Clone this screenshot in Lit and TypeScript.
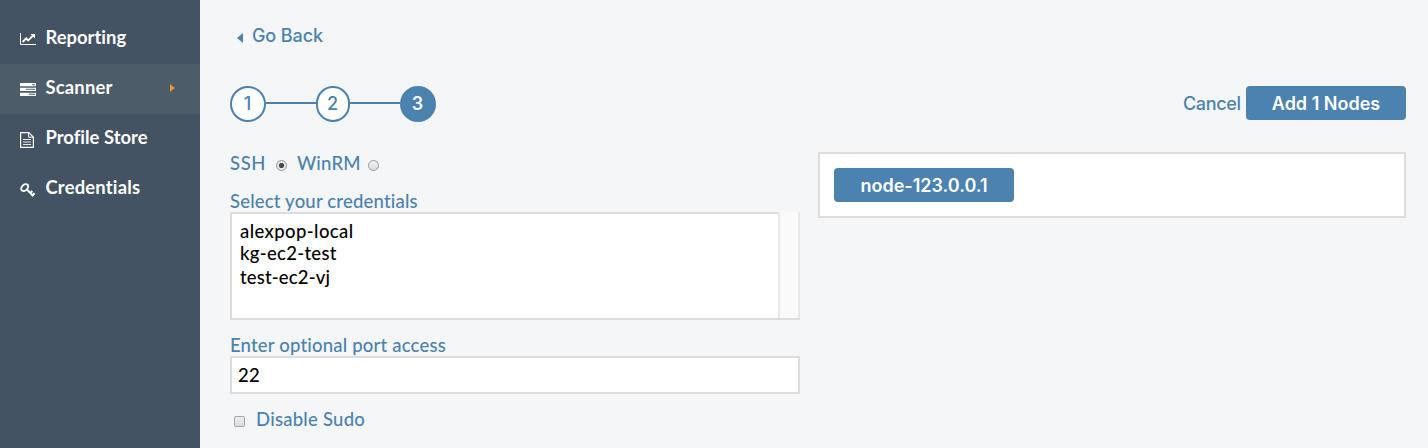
import { LitElement, html, css, svg } from "lit";
import { customElement } from "lit/decorators.js";

const chartIcon = svg`<svg width="16" height="12" viewBox="0 0 16 12"><path d="M.5 0v11.5H16" fill="none" stroke="#fff"/><path d="M2.6 9 6.2 5.4 8.2 7.4 13 2.6" fill="none" stroke="#fff" stroke-width="2"/><path d="M10.5 1H15v4.5z" fill="#fff"/></svg>`;
const serverIcon = svg`<svg width="16" height="13" viewBox="0 0 16 13"><path d="M0 0h16v3.2H0zM0 4.8h16V8H0zM0 9.7h16v3.2H0z" fill="#fff"/><path d="M12 1h3v1.2h-3zM6 5.8h9V7H6zM9 10.6h6v1.3H9z" fill="#7d8994"/></svg>`;
const fileIcon = svg`<svg width="14" height="16" viewBox="0 0 14 16"><path d="M.6.6h8.2l4.6 4.6v10.2H.6z" fill="none" stroke="#fff" stroke-width="1.2"/><path d="M8.6.6v4.6h4.8" fill="none" stroke="#fff"/><path d="M3 7.5h8M3 10h8M3 12.5h8" stroke="#e4e8eb" stroke-width="1.1"/></svg>`;
const keyIcon = svg`<svg width="16" height="15" viewBox="0 0 16 15"><ellipse cx="4.7" cy="4.6" rx="4" ry="2.8" transform="rotate(-45 4.7 4.6)" fill="none" stroke="#fff" stroke-width="1.9"/><path d="M6.6 6.3 13.4 13.2M10.3 10l2-2M12.6 12.2l2-2" fill="none" stroke="#fff" stroke-width="2"/></svg>`;

@customElement("app-root")
export class AppRoot extends LitElement {
  static styles = css`
    :host { display: flex; width: 1428px; height: 448px; overflow: hidden; background: #f4f6f8; color: #4b82af; font: 18.5px/24px Lato, sans-serif; white-space: nowrap; font-variant-ligatures: none; }
    * { box-sizing: border-box; }
    svg { display: block; }
    .side { width: 200px; padding-top: 14px; background: #445363; color: #fff; flex: none; font-size: 18.4px; letter-spacing: 0.02px; }
    .item { display: flex; height: 50px; padding: 11px 25px 0 20px; font-weight: 700; }
    .item.active { background: #4d5c69; }
    .item.active, .item.cred { letter-spacing: 0.2px; }
    .icon { width: 25.5px; padding-top: 8px; }
    .icon.file { padding-top: 7px; }
    .caret { margin: 9px 0 0 auto; width: 5px; height: 8px; background: #e8943a; clip-path: polygon(0 0, 100% 50%, 0 100%); }
    .main { flex: 1; padding: 23px 22px 0 30px; font-weight: 500; }
    .inter { font-family: Inter, sans-serif; font-size: 18px; }
    .back { display: flex; height: 63px; padding: 1px 0 0 7px; letter-spacing: -0.1px; }
    .arrow { width: 6px; height: 10px; margin: 9px 9px 0 0; background: #4b82af; clip-path: polygon(100% 0, 0 50%, 100% 100%); }
    .top { display: flex; height: 66px; align-items: flex-start; }
    .step { display: flex; align-items: center; justify-content: center; width: 36px; height: 36px; padding-right: 1px; border: 2px solid #4b82af; border-radius: 18px; background: #fff; }
    .step.narrow { width: 34px; border-radius: 17px; }
    .step.on { background: #4b82af; color: #fff; font-weight: 600; }
    .line { width: 50px; height: 2px; background: #4b82af; margin-top: 16px; }
    .cancel { margin: 6px 5px 0 auto; width: 58px; letter-spacing: -0.35px; }
    .btn { height: 34px; line-height: 36px; text-align: center; background: #4b82af; color: #fff; border-radius: 4px; font-weight: 600; }
    .add { width: 160px; }
    .cols { display: flex; gap: 18px; }
    .form { width: 570px; letter-spacing: 0.19px; }
    .radios { display: flex; height: 38px; }
    .radios span, .label span, .port span { display: block; margin-top: -1px; }
    .word { width: 46px; letter-spacing: 0.6px; }
    .win { width: 71px; }
    .radio { width: 11px; height: 11px; margin-top: 8px; border: 1px solid #999; border-radius: 50%; background: linear-gradient(#f1f1f1, #dcdcdc); }
    .radio.checked { background: radial-gradient(circle, #4a4a4a 2.2px, #e8e8e8 3px); margin-right: 10px; }
    .label { height: 22px; display: flex; }
    .list { display: flex; height: 108px; background: #fff; border: solid #ddd; border-width: 0 0 2px 2px; color: #000; }
    .opts { flex: 1; border-top: 2px solid #ddd; padding: 6px 0 0 8px; line-height: 23px; letter-spacing: 0.3px; }
    .opt:first-child { height: 22px; letter-spacing: 0.4px; }
    .opt:nth-child(2) { height: 24px; }
    .opt:last-child { letter-spacing: 0.15px; }
    .track { width: 22px; border: solid #e8e8e8; border-width: 0 2px; background: #fafafa; }
    .port { padding-top: 14px; height: 36px; }
    .input { height: 38px; border: 2px solid #ddd; background: #fff; color: #000; padding: 5px 6px 0; }
    .check { display: flex; padding: 13px 0 0 4px; letter-spacing: 0.25px; }
    .box { width: 11px; height: 11px; margin: 9px 11px 0 0; border: 1px solid #a5a5a5; border-radius: 2px; background: linear-gradient(#eee, #dcdcdc); }
    .nodes { flex: 1; height: 66px; border: 2px solid #ddd; background: #fff; padding: 14px; }
    .node { width: 180px; }
  `;

  render() {
    return html`
      <nav class="side">
        <div class="item"><span class="icon">${chartIcon}</span><span>Reporting</span></div>
        <div class="item active"><span class="icon">${serverIcon}</span><span>Scanner</span><i class="caret"></i></div>
        <div class="item"><span class="icon file">${fileIcon}</span><span>Profile Store</span></div>
        <div class="item cred"><span class="icon">${keyIcon}</span><span>Credentials</span></div>
      </nav>
      <main class="main">
        <div class="back inter"><i class="arrow"></i><span>Go Back</span></div>
        <div class="top inter">
          <span class="step">1</span><i class="line"></i><span class="step narrow">2</span><i class="line"></i><span class="step on">3</span>
          <span class="cancel">Cancel</span><span class="btn add">Add 1 Nodes</span>
        </div>
        <div class="cols">
          <div class="form">
            <div class="radios"><span class="word">SSH</span><i class="radio checked"></i><span class="win">WinRM</span><i class="radio"></i></div>
            <div class="label"><span>Select your credentials</span></div>
            <div class="list">
              <div class="opts"><div class="opt">alexpop-local</div><div class="opt">kg-ec2-test</div><div class="opt">test-ec2-vj</div></div>
              <div class="track"></div>
            </div>
            <div class="port"><span>Enter optional port access</span></div>
            <div class="input">22</div>
            <div class="check"><i class="box"></i><span>Disable Sudo</span></div>
          </div>
          <div class="nodes"><div class="btn node inter">node-123.0.0.1</div></div>
        </div>
      </main>`;
  }
}
